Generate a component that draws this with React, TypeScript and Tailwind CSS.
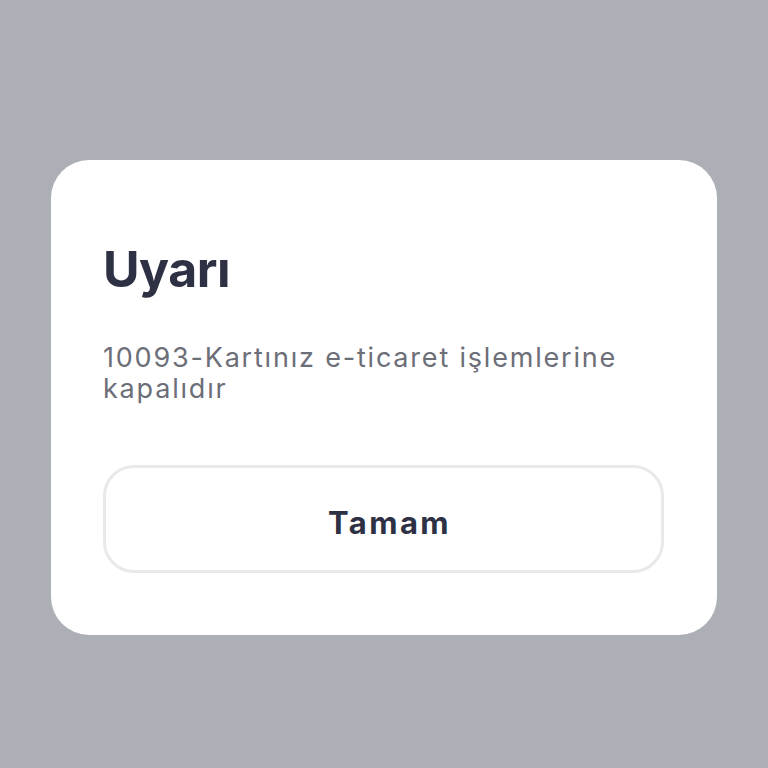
import React from 'react';

// Alert dialog over a dimmed backdrop
export default function App() {
    return (
        <div
            className="w-[768px] h-[768px] bg-[#adafb7] pt-[160px] px-[51px]"
            style={{ fontFamily: 'Inter, "Noto Sans", sans-serif' }}
        >
            <div className="w-[666px] h-[475px] bg-white rounded-[38px] pl-[52px] pr-[53px] pt-[79px]">
                <h1 className="text-[50px] leading-[60px] font-bold tracking-[-0.5px] text-[#2e3044]">Uyarı</h1>
                <p className="mt-[43px] text-[27px] leading-[31px] tracking-[1.8px] text-[#6c6e78]">
                    10093-Kartınız e-ticaret işlemlerine
                    <br />
                    kapalıdır
                </p>
                <button className="mt-[61px] w-full h-[108px] pt-[8px] pl-[12px] rounded-[31px] border-[3px] border-[#e9e9eb] bg-white text-[31px] font-bold tracking-[2.4px] text-[#2e3044]">
                    Tamam
                </button>
            </div>
        </div>
    );
}
